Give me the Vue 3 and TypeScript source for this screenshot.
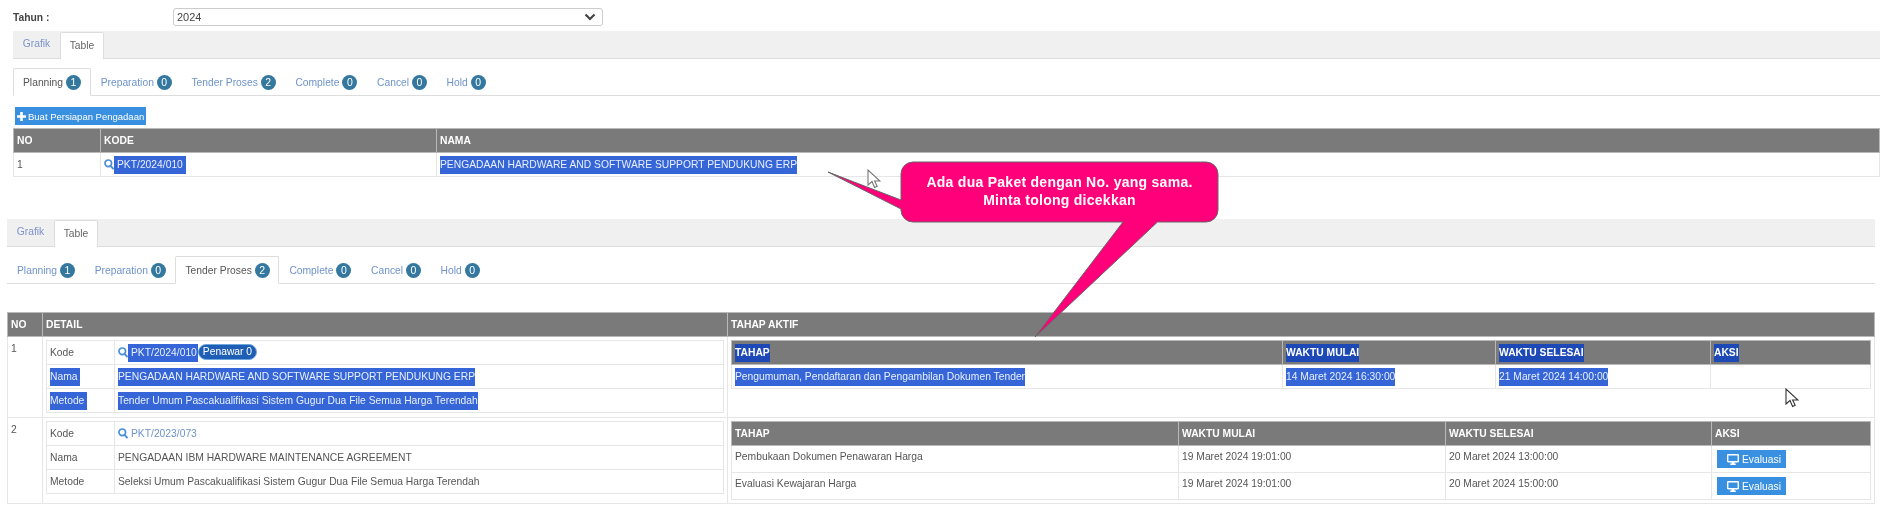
<script setup lang="ts">
interface Tab { label: string; count: number }
const tabs: Tab[] = [
  { label: 'Planning', count: 1 },
  { label: 'Preparation', count: 0 },
  { label: 'Tender Proses', count: 2 },
  { label: 'Complete', count: 0 },
  { label: 'Cancel', count: 0 },
  { label: 'Hold', count: 0 },
]
const steps = [
  { name: 'Pembukaan Dokumen Penawaran Harga', start: '19 Maret 2024 19:01:00', end: '20 Maret 2024 13:00:00' },
  { name: 'Evaluasi Kewajaran Harga', start: '19 Maret 2024 19:01:00', end: '20 Maret 2024 15:00:00' },
]
</script>

<template>
  <div class="page">
    <section class="block first">
      <div class="year">
        <label>Tahun :</label>
        <div class="select">
          <span>2024</span>
          <svg width="12" height="8" viewBox="0 0 12 8"><path d="M1.5 1.5 6 6l4.500-4.500" fill="none" stroke="#444" stroke-width="2.200" /></svg>
        </div>
      </div>
      <div class="topbar">
        <a>Grafik</a>
        <a class="on">Table</a>
      </div>
      <div class="subtabs">
        <a v-for="(t, i) in tabs" :key="t.label" :class="{ on: i === 0 }">{{ t.label }} <b>{{ t.count }}</b></a>
      </div>
      <button class="add">
        <svg width="9" height="9" viewBox="0 0 9 9"><path d="M3.200 0h2.600v3.200H9v2.600H5.800V9H3.200V5.800H0V3.200h3.200z" fill="#fff" /></svg>
        Buat Persiapan Pengadaan
      </button>
      <table class="grid t1">
        <colgroup><col style="width:87px" /><col style="width:336px" /><col /></colgroup>
        <thead><tr><th>NO</th><th>KODE</th><th>NAMA</th></tr></thead>
        <tbody>
          <tr>
            <td>1</td>
            <td><svg class="search" viewBox="0 0 10 11"><circle cx="4.300" cy="4.300" r="3.300" fill="none" stroke-width="1.700" /><path d="m6.600 6.800 3 3.400" stroke-width="2" /></svg><span class="sel pad">PKT/2024/010</span></td>
            <td><span class="sel">PENGADAAN HARDWARE AND SOFTWARE SUPPORT PENDUKUNG ERP</span></td>
          </tr>
        </tbody>
      </table>
    </section>

    <section class="block second">
      <div class="topbar">
        <a>Grafik</a>
        <a class="on">Table</a>
      </div>
      <div class="subtabs">
        <a v-for="(t, i) in tabs" :key="t.label" :class="{ on: i === 2 }">{{ t.label }} <b>{{ t.count }}</b></a>
      </div>
      <table class="grid main">
        <colgroup><col style="width:35px" /><col style="width:685px" /><col /></colgroup>
        <thead><tr><th>NO</th><th>DETAIL</th><th>TAHAP AKTIF</th></tr></thead>
        <tbody>
          <tr class="r1">
            <td>1</td>
            <td>
              <table class="grid detail">
                <colgroup><col style="width:68px" /><col /></colgroup>
                <tbody>
                  <tr><td>Kode</td><td><svg class="search" viewBox="0 0 10 11"><circle cx="4.300" cy="4.300" r="3.300" fill="none" stroke-width="1.700" /><path d="m6.600 6.800 3 3.400" stroke-width="2" /></svg><span class="sel pad tight">PKT/2024/010</span><span class="pill">Penawar 0</span></td></tr>
                  <tr><td><span class="sel lbl">Nama</span></td><td><span class="sel">PENGADAAN HARDWARE AND SOFTWARE SUPPORT PENDUKUNG ERP</span></td></tr>
                  <tr><td><span class="sel lbl">Metode</span></td><td><span class="sel">Tender Umum Pascakualifikasi Sistem Gugur Dua File Semua Harga Terendah</span></td></tr>
                </tbody>
              </table>
            </td>
            <td>
              <table class="grid steps">
                <colgroup><col style="width:551px" /><col style="width:213px" /><col style="width:215px" /><col /></colgroup>
                <thead><tr><th><span class="selh">TAHAP</span></th><th><span class="selh">WAKTU MULAI</span></th><th><span class="selh">WAKTU SELESAI</span></th><th><span class="selh">AKSI</span></th></tr></thead>
                <tbody>
                  <tr>
                    <td><span class="sel">Pengumuman, Pendaftaran dan Pengambilan Dokumen Tender</span></td>
                    <td><span class="sel">14 Maret 2024 16:30:00</span></td>
                    <td><span class="sel">21 Maret 2024 14:00:00</span></td>
                    <td></td>
                  </tr>
                </tbody>
              </table>
            </td>
          </tr>
          <tr class="r2">
            <td>2</td>
            <td>
              <table class="grid detail">
                <colgroup><col style="width:68px" /><col /></colgroup>
                <tbody>
                  <tr><td>Kode</td><td><svg class="search" viewBox="0 0 10 11"><circle cx="4.300" cy="4.300" r="3.300" fill="none" stroke-width="1.700" /><path d="m6.600 6.800 3 3.400" stroke-width="2" /></svg><a class="code">PKT/2023/073</a></td></tr>
                  <tr><td>Nama</td><td>PENGADAAN IBM HARDWARE MAINTENANCE AGREEMENT</td></tr>
                  <tr><td>Metode</td><td>Seleksi Umum Pascakualifikasi Sistem Gugur Dua File Semua Harga Terendah</td></tr>
                </tbody>
              </table>
            </td>
            <td>
              <table class="grid steps tall">
                <colgroup><col style="width:447px" /><col style="width:267px" /><col style="width:266px" /><col /></colgroup>
                <thead><tr><th>TAHAP</th><th>WAKTU MULAI</th><th>WAKTU SELESAI</th><th>AKSI</th></tr></thead>
                <tbody>
                  <tr v-for="s in steps" :key="s.name">
                    <td class="up">{{ s.name }}</td>
                    <td class="up">{{ s.start }}</td>
                    <td class="up">{{ s.end }}</td>
                    <td>
                      <button class="eval">
                        <svg width="12" height="11" viewBox="0 0 12 11"><path d="M1.200 0h9.600c.7 0 1.200.5 1.200 1.200v6c0 .7-.5 1.200-1.200 1.200H7.400v1.200h1.400V11H3.200V9.600h1.400V8.400H1.200C.5 8.400 0 7.900 0 7.200v-6C0 .5.500 0 1.200 0zm.2 1.400v5.600h9.200V1.400z" fill="#fff" fill-rule="evenodd" /></svg>
                        Evaluasi
                      </button>
                    </td>
                  </tr>
                </tbody>
              </table>
            </td>
          </tr>
        </tbody>
      </table>
    </section>

    <div class="callout">
      <svg class="balloon" width="400" height="180" viewBox="0 0 400 180">
        <path d="M85 5h293a12 12 0 0 1 12 12v36a12 12 0 0 1-12 12H329.500L207 180 295 65H85a12 12 0 0 1-12-12V52L0 15l73 28V17A12 12 0 0 1 85 5z" fill="#ff007a" stroke="#666" stroke-width="1" />
      </svg>
      <p>Ada dua Paket dengan No. yang sama.<br />Minta tolong dicekkan</p>
    </div>

    <svg class="cursor c1" width="14" height="20" viewBox="0 0 14 20"><path d="M1 1v15l4-3.500 2.600 6 2.600-1.200L7.600 12H13z" fill="#fff" stroke="#777" stroke-width="1.100" /></svg>
    <svg class="cursor c2" width="14" height="20" viewBox="0 0 14 20"><path d="M1 1v15l4-3.500 2.600 6 2.600-1.200L7.600 12H13z" fill="#fff" stroke="#333" stroke-width="1.100" /></svg>
  </div>
</template>

<style>
html, body { margin: 0; background: #fff; }
</style>

<style scoped>
.page {
  position: relative;
  width: 1889px;
  height: 520px;
  overflow: hidden;
  font-family: "Liberation Sans", Arial, sans-serif;
  font-size: 10.3px;
  color: #555;
  filter: blur(.4px);
}
.block.first { padding: 8px 9px 0 13px; }
.block.second { padding: 42px 14px 0 7px; }
.year { display: flex; align-items: center; height: 18px; margin-bottom: 5px; }
.year label { width: 160px; font-weight: 700; color: #444; }
.select {
  width: 430px;
  height: 18px;
  box-sizing: border-box;
  border: 1px solid #ccc;
  border-radius: 3px;
  padding: 0 6px 0 3px;
  display: flex;
  align-items: center;
  justify-content: space-between;
  font-size: 11px;
  color: #444;
}
.topbar {
  display: flex;
  height: 27px;
  background: #f0f0f0;
  border-bottom: 1px solid #ddd;
  align-items: flex-end;
}
.topbar a {
  display: block;
  width: 47px;
  box-sizing: border-box;
  height: 27px;
  line-height: 25px;
  text-align: center;
  color: #7c93c9;
}
.topbar a.on {
  width: 44px;
  margin-bottom: -1px;
  height: 27px;
  background: #fff;
  border: 1px solid #ddd;
  border-bottom: 0;
  border-radius: 2px 2px 0 0;
  color: #666;
}
.subtabs {
  display: flex;
  height: 27px;
  margin-top: 9px;
  border-bottom: 1px solid #ddd;
}
.second .subtabs { margin-bottom: 28px; }
.subtabs a {
  display: flex;
  align-items: center;
  height: 28px;
  box-sizing: border-box;
  padding: 0 8.700px 0 9px;
  color: #6f93cb;
  border: 1px solid transparent;
  white-space: pre;
}
.subtabs a.on {
  background: #fff;
  border-color: #ddd;
  border-bottom-color: #fff;
  border-radius: 2px 2px 0 0;
  color: #555;
}
.subtabs b {
  width: 15px;
  height: 15px;
  border-radius: 50%;
  background: #34789f;
  color: #fff;
  font-weight: 400;
  font-size: 10.5px;
  line-height: 15px;
  text-align: center;
}
.add {
  display: flex;
  align-items: center;
  gap: 2px;
  width: 131px;
  height: 18px;
  margin: 11px 0 3px 2px;
  padding: 0 0 0 2px;
  border: 0;
  background: #3a90e0;
  color: #fff;
  font: inherit;
  font-size: 9.5px;
  white-space: nowrap;
}
.add svg { flex-shrink: 0; }
.grid {
  border-collapse: collapse;
  table-layout: fixed;
  width: 100%;
}
.grid th, .grid td {
  border: 1px solid #e6e6e6;
  text-align: left;
  padding: 0 3px;
  font-weight: 400;
  vertical-align: middle;
}
.grid th {
  height: 23px;
  background: #7a7a7a;
  color: #fff;
  font-weight: 700;
  border-color: #b9b9b9;
}
.t1 td { height: 23px; }
.main > tbody > tr > td { vertical-align: top; padding: 3px; }
.main > tbody > tr > td:first-child { padding: 6px 3px 0; }
.r1 > td { height: 74px; }
.r2 > td { height: 78px; }
.detail tr { height: 24px; }
.steps tr { height: 24px; }
.steps.tall tbody tr { height: 27px; }
.up { padding-bottom: 5px !important; }
.sel {
  display: inline-block;
  background: #3565d6;
  color: #e8f0ff;
  line-height: 18px;
}
.sel.pad { padding: 0 3px; }
.sel.pad.tight { padding-right: 1px; }
.sel.lbl { padding-right: 3px; }
.selh {
  display: inline-block;
  background: #1c49b6;
  color: #fff;
  line-height: 18px;
}
.search {
  width: 10px;
  height: 11px;
  margin: 0;
  vertical-align: -2px;
  stroke: #4a8fd8;
  fill: none;
}
.code { color: #6f93cb; margin-left: 3px; }
.pill {
  display: inline-block;
  background: #1e5fb5;
  border: 1px solid #6fa8dc;
  box-sizing: border-box;
  height: 16px;
  line-height: 14px;
  border-radius: 8px;
  padding: 0 4px;
  color: #fff;
  vertical-align: 1px;
}
.eval {
  display: flex;
  align-items: center;
  gap: 3px;
  width: 69px;
  height: 18px;
  margin-left: 2px;
  padding: 0 0 0 10px;
  border: 0;
  background: #3a90e0;
  color: #fff;
  font: inherit;
}
.callout {
  position: absolute;
  left: 828px;
  top: 157px;
  width: 400px;
  height: 180px;
}
.balloon { position: absolute; left: 0; top: 0; }
.callout p {
  position: absolute;
  left: 73px;
  top: 16px;
  width: 317px;
  margin: 0;
  text-align: center;
  color: #fff;
  font-weight: 700;
  font-size: 14px;
  line-height: 18px;
  letter-spacing: .27px;
}
.cursor { position: absolute; }
.c1 { left: 867px; top: 169px; }
.c2 { left: 1785px; top: 388px; }
</style>
